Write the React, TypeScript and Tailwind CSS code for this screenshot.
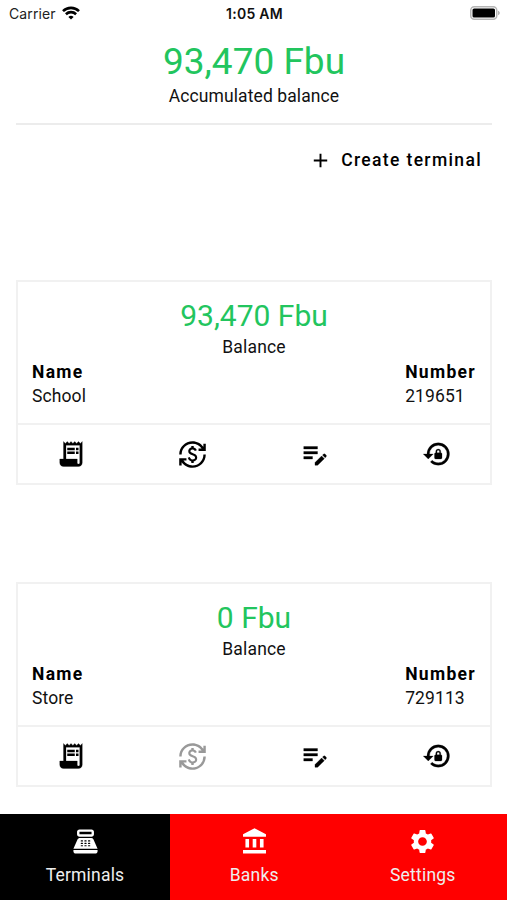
import type { ReactNode } from "react";
import { MdAdd, MdCurrencyExchange, MdPointOfSale, MdSettings } from "react-icons/md";

const terminals = [
  { name: "School", number: "219651", balance: "93,470", canWithdraw: true },
  { name: "Store", number: "729113", balance: "0", canWithdraw: false },
];

function BoldIcon({ weight, children }: { weight: number; children: ReactNode }) {
  return (
    <svg
      className="h-[30px] w-[30px]"
      viewBox="0 0 24 24"
      fill="currentColor"
      stroke="currentColor"
      strokeWidth={weight}
    >
      {children}
    </svg>
  );
}

function ReceiptIcon() {
  return (
    <BoldIcon weight={0.2}>
      <path d="M19.5 3.5L18 2l-1.5 1.5L15 2l-1.5 1.5L12 2l-1.5 1.5L9 2 7.5 3.5 6 2v14H3v3c0 1.66 1.34 3 3 3h12c1.66 0 3-1.34 3-3V2l-1.5 1.5zM19 19c0 .55-.45 1-1 1s-1-.45-1-1v-3H8V5h11v14z" />
      <path d="M9 7h6v2H9zM16 7h2v2h-2zM9 10h6v2H9zM16 10h2v2h-2z" stroke="none" />
    </BoldIcon>
  );
}

function EditNoteIcon() {
  return (
    <BoldIcon weight={0.25}>
      <path d="M3 10h11v2H3v-2zm0-2h11V6H3v2zm0 8h7v-2H3v2zm15.01-3.13.71-.71a.996.996 0 0 1 1.41 0l.71.71c.39.39.39 1.02 0 1.41l-.71.71-2.12-2.12zm-.71.71-5.3 5.3V21h2.12l5.3-5.3-2.12-2.12z" />
    </BoldIcon>
  );
}

function LockResetIcon() {
  return (
    <BoldIcon weight={0.2}>
      <path d="M13 3a9 9 0 0 0-9 9H1l4 4 4-4H6a7 7 0 1 1 7 7c-1.9 0-3.62-.76-4.88-1.99L6.7 18.42A8.98 8.98 0 0 0 13 21a9 9 0 0 0 0-18z" />
      <path d="M15 11v-1a2 2 0 0 0-4 0v1a1 1 0 0 0-1 1v3a1 1 0 0 0 1 1h4a1 1 0 0 0 1-1v-3a1 1 0 0 0-1-1zm-1 0h-2v-1a1 1 0 0 1 2 0v1z" />
    </BoldIcon>
  );
}

function BankIcon() {
  return (
    <svg className="h-[29px] w-[29px] text-white" viewBox="-0.5 0 24 24" fill="currentColor">
      <path d="M11.5 1L2 6v2h19V6M16 10v7h3v-7M2 22h19v-3H2M10 10v7h3v-7M4 10v7h3v-7H4z" />
    </svg>
  );
}

function StatusBar() {
  return (
    <div className="flex h-7 items-center justify-between pl-[9px] pr-[7px] font-[Inter,sans-serif]">
      <div className="flex flex-1 items-center gap-[6px]">
        <span className="-mt-px text-[14px] tracking-[0.1px] text-[#222]">Carrier</span>
        <svg className="-mt-[2px] h-[14px] w-[18px]" viewBox="0 0 18 14" fill="none" stroke="#000" strokeWidth="2.6">
          <path d="M1 5.1a11.5 11.5 0 0 1 16 0" />
          <path d="M3.9 8.2a7.4 7.4 0 0 1 10.2 0" />
          <path d="M9 13.6l-2.6-2.7a3.9 3.9 0 0 1 5.2 0z" fill="#000" stroke="none" />
        </svg>
      </div>
      <span className="-mt-px text-[14px] font-semibold tracking-[0.25px] text-[#111]">1:05 AM</span>
      <div className="flex flex-1 justify-end">
        <svg className="-mt-[2px] h-[14px] w-[30px]" viewBox="0 0 30 14">
          <rect x="0.75" y="0.75" width="26" height="12.5" rx="3.5" fill="#fff" stroke="#b5b5b5" strokeWidth="1.5" />
          <rect x="2.5" y="2.5" width="22.5" height="9" rx="1.6" fill="#000" />
          <path d="M28 4.8c1.2.4 1.8 1.2 1.8 2.2s-.6 1.8-1.8 2.2z" fill="#b5b5b5" />
        </svg>
      </div>
    </div>
  );
}

function TerminalCard({ terminal }: { terminal: (typeof terminals)[number] }) {
  return (
    <div className="h-[205px] border-2 border-[#f1f1f1]">
      <div className="flex h-[141px] flex-col px-[14px] pt-[14px]">
        <p className="text-center text-[30px] leading-[40px] text-[#22c55e]">{terminal.balance} Fbu</p>
        <p className="-mt-px text-center text-[17.5px] leading-[24px] tracking-[0.2px]">Balance</p>
        <div className="flex justify-between text-[17.5px]">
          <div>
            <p className="pt-px font-bold leading-[24px] tracking-[1.3px] text-black">Name</p>
            <p className="leading-[24px] tracking-[0.1px]">{terminal.name}</p>
          </div>
          <div>
            <p className="pt-px font-bold leading-[24px] tracking-[1.3px] text-black">Number</p>
            <p className="leading-[24px] tracking-[0.1px]">{terminal.number}</p>
          </div>
        </div>
      </div>
      <div className="flex h-[60px] items-center justify-between border-t-2 border-[#f1f1f1] pl-[38px] pr-[38px] text-black">
        <ReceiptIcon />
        <MdCurrencyExchange size={29} className={terminal.canWithdraw ? "" : "text-[#999]"} />
        <EditNoteIcon />
        <LockResetIcon />
      </div>
    </div>
  );
}

export default function App() {
  return (
    <div className="flex h-[900px] w-full flex-col bg-white font-[Roboto,sans-serif] text-[#111]">
      <StatusBar />
      <main className="flex-1 pl-4 pr-[15px]">
        <div className="h-[97px] border-b-2 border-[#ececec] pt-[10px] text-center">
          <h1 className="text-[37px] leading-[48px] text-[#22c55e]">93,470 Fbu</h1>
          <p className="text-[17.5px] leading-[20px] tracking-[0.1px]">Accumulated balance</p>
        </div>
        <div className="flex h-[155px] justify-end pr-[10px] pt-[25px]">
          <button
            type="button"
            className="flex h-5 items-center gap-[9px] text-[17.5px] font-medium tracking-[1.35px] text-black"
          >
            <MdAdd size={23} />
            Create terminal
          </button>
        </div>
        <div className="flex flex-col gap-[97px]">
          {terminals.map((t) => (
            <TerminalCard key={t.number} terminal={t} />
          ))}
        </div>
      </main>
      <nav className="grid h-[86px] grid-cols-[170px_1fr_1fr] text-[17.5px] leading-5 tracking-[0.2px] text-[#eee]">
        <div className="flex flex-col items-center gap-[9px] bg-black pt-[13px]">
          <MdPointOfSale size={29} className="text-white" />
          Terminals
        </div>
        <div className="flex flex-col items-center gap-[9px] bg-[#ff0000] pt-[13px]">
          <BankIcon />
          Banks
        </div>
        <div className="flex flex-col items-center gap-[9px] bg-[#ff0000] pt-[13px]">
          <MdSettings size={29} className="text-white" />
          Settings
        </div>
      </nav>
    </div>
  );
}
